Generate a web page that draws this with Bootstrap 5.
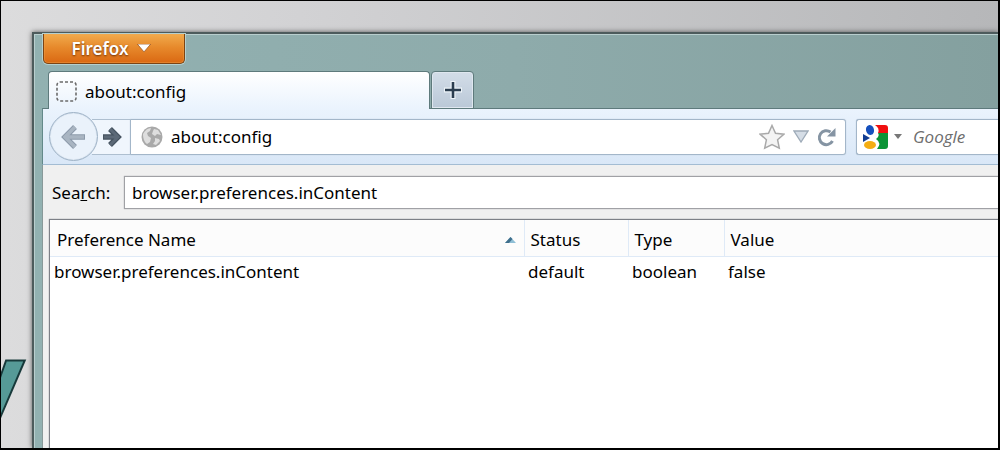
<!DOCTYPE html>
<html lang="en">
<head>
<meta charset="utf-8">
<meta name="viewport" content="width=device-width, initial-scale=1">
<title>about:config</title>
<link href="https://cdn.jsdelivr.net/npm/bootstrap@5.3.0/dist/css/bootstrap.min.css" rel="stylesheet">
<style>
  body { font-family: "Noto Sans", "Open Sans", sans-serif; font-size: 17px; line-height: 24px; color: #000; background: #000; }
  svg { display: block; flex-shrink: 0; }
  .desktop { min-height: 100vh; padding: 31px 0 0 31px; border: 1px solid #000; border-width: 1px 2px 2px 1px;
    background: linear-gradient(90deg, #dcdcdd 0, #d2d2d4 30%, #b6b7b9 100%); }
  .wallpaper-text { left: -45px; top: 333px; font: 600 130px/150px "Roboto Condensed", "Liberation Sans Narrow", Roboto, sans-serif;
    color: #569a97; -webkit-text-stroke: 2px #17393a; }
  .window { border: 2px solid #4d5b5c; border-width: 2px 0 0 2px; padding-left: 8px;
    background: linear-gradient(90deg, #92b1b1, #8eabab 50%, #84a09f); box-shadow: inset 1px 1px #b9cece, 0 0 5px #555; }
  .app-btn { width: 142px; height: 30px; margin-left: 1px; padding: 0 4px 0 0; font-size: 17px; font-weight: 600; line-height: 24px; color: #fff;
    border: 1px solid #7d4311; border-top: 0; border-radius: 0 0 5px 5px;
    background: linear-gradient(#f1ab4d, #e78a2c 45%, #da6812); box-shadow: inset 0 0 0 1px #f0a55066, 0 0 0 1px #b5cfce; text-shadow: 0 1px 2px #6b3008; }
  .app-btn:hover { color: #fff; }
  .tab-row { padding-left: 6px; margin-top: 7px; }
  .tab-main { position: relative; z-index: 1; flex: 0 0 382px; height: 38px; padding: 2px 7px 0; border: 1px solid #5e7a7c; border-bottom: 0; border-radius: 4px 4px 0 0;
    background: linear-gradient(#fff, #eaf3fd); color: #000; text-decoration: none; }
  .tab-new { width: 43px; height: 38px; margin-left: 1px; padding: 0; border: 1px solid #5e7a7c; border-radius: 4px 4px 0 0;
    background: linear-gradient(#d3dde8, #bac8d7); box-shadow: inset 0 0 0 1px #dfe7ef; }
  .toolbar { height: 57px; padding: 0 0 0 6px; margin-top: -1px; border-top: 1px solid #5e7a7c; border-left: 1px solid #63898a; border-bottom: 1px solid #a3bcd3;
    background: linear-gradient(#eaf3fd, #d9e7f7); }
  .nav-btn { padding: 0; border: 0; background: none; }
  .back-btn { position: relative; z-index: 1; width: 49px; height: 49px; border: 1px solid #9fb3c7; border-radius: 50%; background: #eaf2fb; box-shadow: inset 0 0 1px #9fb3c7; }
  .fwd-btn { width: 38px; height: 36px; margin-left: -6px; padding-left: 2px; border: solid #aebfd0; border-width: 1px 0; background: #f0f6fd; }
  .field-box { height: 36px; border: 1px solid #a3b6c9; background: #fff; box-shadow: 0 0 1px #a3b6c9; }
  .url-box { flex: 1 1 auto; border-radius: 0 3px 3px 0; padding: 0 8px 0 10px; }
  .find-box { flex: 0 0 142px; margin-left: 10px; border-right: 0; border-radius: 3px 0 0 3px; padding-left: 6px; }
  .bare { border: 0; padding: 0; min-width: 0; background: none; color: #000; outline: 0; }
  .find-box .bare { margin-left: 6px; font-family: "Open Sans", sans-serif; font-style: italic; }
  .find-box .bare::placeholder { color: #6d6d6d; opacity: 1; }
  .content-pane { border-left: 1px solid #899; background: #f0f0f0; padding: 11px 0 0 6px; }
  .filter-row label { width: 75px; padding-left: 3px; }
  .filter-input { height: 33px; border: 1px solid #a0a1a5; border-right: 0; padding: 0 7px; background: #fff; color: #000; box-shadow: 0 0 1px #a0a1a5; }
  .pref-wrap { margin-top: 10px; border: 1px solid #7d8087; border-right: 0; border-bottom: 0; background: #fff; box-shadow: 0 0 1px #7d8087; }
  .prefs { table-layout: fixed; width: 100%; margin: 0; }
  .prefs th { height: 36px; padding: 4px 0 0 6px; font-weight: 400; background: #fcfcfc; border-right: 1px solid #dfeaf7; border-bottom: 1px solid #dfeaf7; }
  .prefs th:first-child { padding-left: 7px; }
  .prefs th:last-child { border-right: 0; }
  .prefs td { height: 32px; padding: 0 0 0 4px; }
  .c-name { width: 474px; } .c-status { width: 104px; } .c-type { width: 96px; }
</style>
</head>
<body>
<div class="desktop d-flex flex-column position-relative overflow-hidden">
  <div class="wallpaper-text position-absolute" aria-hidden="true">Y</div>
  <main class="window flex-grow-1 d-flex flex-column position-relative">
    <header>
      <button type="button" class="app-btn btn d-flex align-items-center justify-content-center gap-2">Firefox
        <svg width="16" height="9" viewBox="0 0 14 8"><path d="M1 0h12L7 7z" fill="#fff" stroke="#8a4512" stroke-width=".6"/></svg>
      </button>
      <nav class="tab-row d-flex" aria-label="Tabs">
        <a href="#" class="tab-main d-flex align-items-center">
          <svg class="me-2" width="21" height="21" viewBox="0 0 21 21"><rect x="1" y="1" width="19" height="19" rx="3" fill="none" stroke="#6b6b6b" stroke-width="1.6" stroke-dasharray="3 2"/></svg>
          <span>about:config</span>
        </a>
        <button type="button" class="tab-new d-flex align-items-center justify-content-center" aria-label="New tab">
          <svg width="20" height="20" viewBox="0 0 20 20"><path d="M10 1v18M1 10h18" stroke="#edf3f8" stroke-width="5"/><path d="M10 2v16M2 10h16" stroke="#2b3d4f" stroke-width="2.600"/></svg>
        </button>
      </nav>
    </header>
    <div class="toolbar d-flex align-items-center">
      <button type="button" class="nav-btn back-btn d-flex align-items-center justify-content-center" aria-label="Back">
        <svg width="26" height="26" viewBox="0 0 26 26"><path d="M14 3 4 13l10 10M5 13h19" fill="none" stroke="#8c9aaa" stroke-width="5.500"/><path d="M14 3 4 13l10 10M5 13h18" fill="none" stroke="#a9b5c2" stroke-width="3.500"/></svg>
      </button>
      <button type="button" class="nav-btn fwd-btn d-flex align-items-center justify-content-center" aria-label="Forward">
        <svg width="20" height="22" viewBox="0 0 20 22"><path d="m8 3 8 8-8 8M1 11h14" fill="none" stroke="#465360" stroke-width="5.500"/><path d="m8 3 8 8-8 8M2 11h13" fill="none" stroke="#5c6977" stroke-width="3"/></svg>
      </button>
      <div class="url-box field-box d-flex align-items-center">
        <svg width="22" height="22" viewBox="0 0 22 22"><circle cx="11" cy="11" r="10.500" fill="#a9a9a9"/><path d="M2 8c2-4 5-6 8-6L9 5 6 7l1 3 3 2-1 4-3 2c-3-2-4-6-4-10zM13 3l4 1 3 5-4-1-2 2-3-2 1-3zM14 12l4 1 1 2-4 4-3-1 2-3z" fill="#dedede"/></svg>
        <input class="bare flex-grow-1 ms-2" type="text" value="about:config" aria-label="Address">
        <button type="button" class="nav-btn" aria-label="Bookmark">
          <svg width="26" height="26" viewBox="0 0 26 26"><path d="m13 1.500 3.500 7.700 8.300 1-6.200 5.600 1.700 8.400L13 20.500l-7.300 3.700 1.700-8.400-6.200-5.600 8.300-1z" fill="#f4f4f4" stroke="#a9a9a9" stroke-width="1.500"/></svg>
        </button>
        <button type="button" class="nav-btn ms-2" aria-label="History">
          <svg width="16" height="13" viewBox="0 0 16 13"><path d="M1 1h14L8 12z" fill="#d5dde6" stroke="#9eabb8" stroke-width="1.300"/></svg>
        </button>
        <button type="button" class="nav-btn ms-2" aria-label="Reload">
          <svg width="20" height="20" viewBox="0 0 20 20"><path d="M15.500 14A7 7 0 1 1 13.500 5" fill="none" stroke="#8594a3" stroke-width="3"/><path d="M18.500 1v8.500H10z" fill="#8594a3"/></svg>
        </button>
      </div>
      <div class="find-box field-box d-flex align-items-center">
        <svg width="26" height="26" viewBox="0 0 26 26"><path d="M12 1h10q3 0 3 3v5H15q2-5-3-8z" fill="#f01010"/><path d="M15 9h10v13q0 3-3 3h-8q5-6-1-10 4-3 2-6z" fill="#0b9436"/><ellipse cx="7" cy="6" rx="4" ry="5" transform="rotate(-15 7 6)" fill="#1550bd"/><path d="m0 10 7 4-7 4z" fill="#123c91"/><ellipse cx="7" cy="21" rx="6" ry="4" fill="#f4ad13"/></svg>
        <button type="button" class="nav-btn mx-1" aria-label="Choose search engine"><svg width="10" height="6" viewBox="0 0 10 6"><path d="M1 0h8L5 5z" fill="#777"/></svg></button>
        <input class="bare flex-grow-1 w-50" type="search" placeholder="Google" aria-label="Web search">
      </div>
    </div>
    <section class="content-pane flex-grow-1 d-flex flex-column">
      <div class="filter-row d-flex align-items-center">
        <label for="filter">Sea<u>r</u>ch:</label>
        <input id="filter" class="filter-input flex-grow-1" type="text" value="browser.preferences.inContent">
      </div>
      <div class="pref-wrap flex-grow-1">
        <table class="prefs">
          <colgroup><col class="c-name"><col class="c-status"><col class="c-type"><col></colgroup>
          <thead><tr>
            <th scope="col"><div class="d-flex align-items-center justify-content-between pe-2">Preference Name
              <svg width="11" height="6" viewBox="0 0 11 6"><path d="M0 6 5.500 0 11 6z" fill="#8fbfd6"/><path d="M0 6 5.500 0l2 2L4 6z" fill="#3f6f8c"/></svg></div></th>
            <th scope="col">Status</th><th scope="col">Type</th><th scope="col">Value</th>
          </tr></thead>
          <tbody><tr><td>browser.preferences.inContent</td><td>default</td><td>boolean</td><td>false</td></tr></tbody>
        </table>
      </div>
    </section>
  </main>
</div>
<script src="https://cdn.jsdelivr.net/npm/bootstrap@5.3.0/dist/js/bootstrap.bundle.min.js"></script>
</body>
</html>
